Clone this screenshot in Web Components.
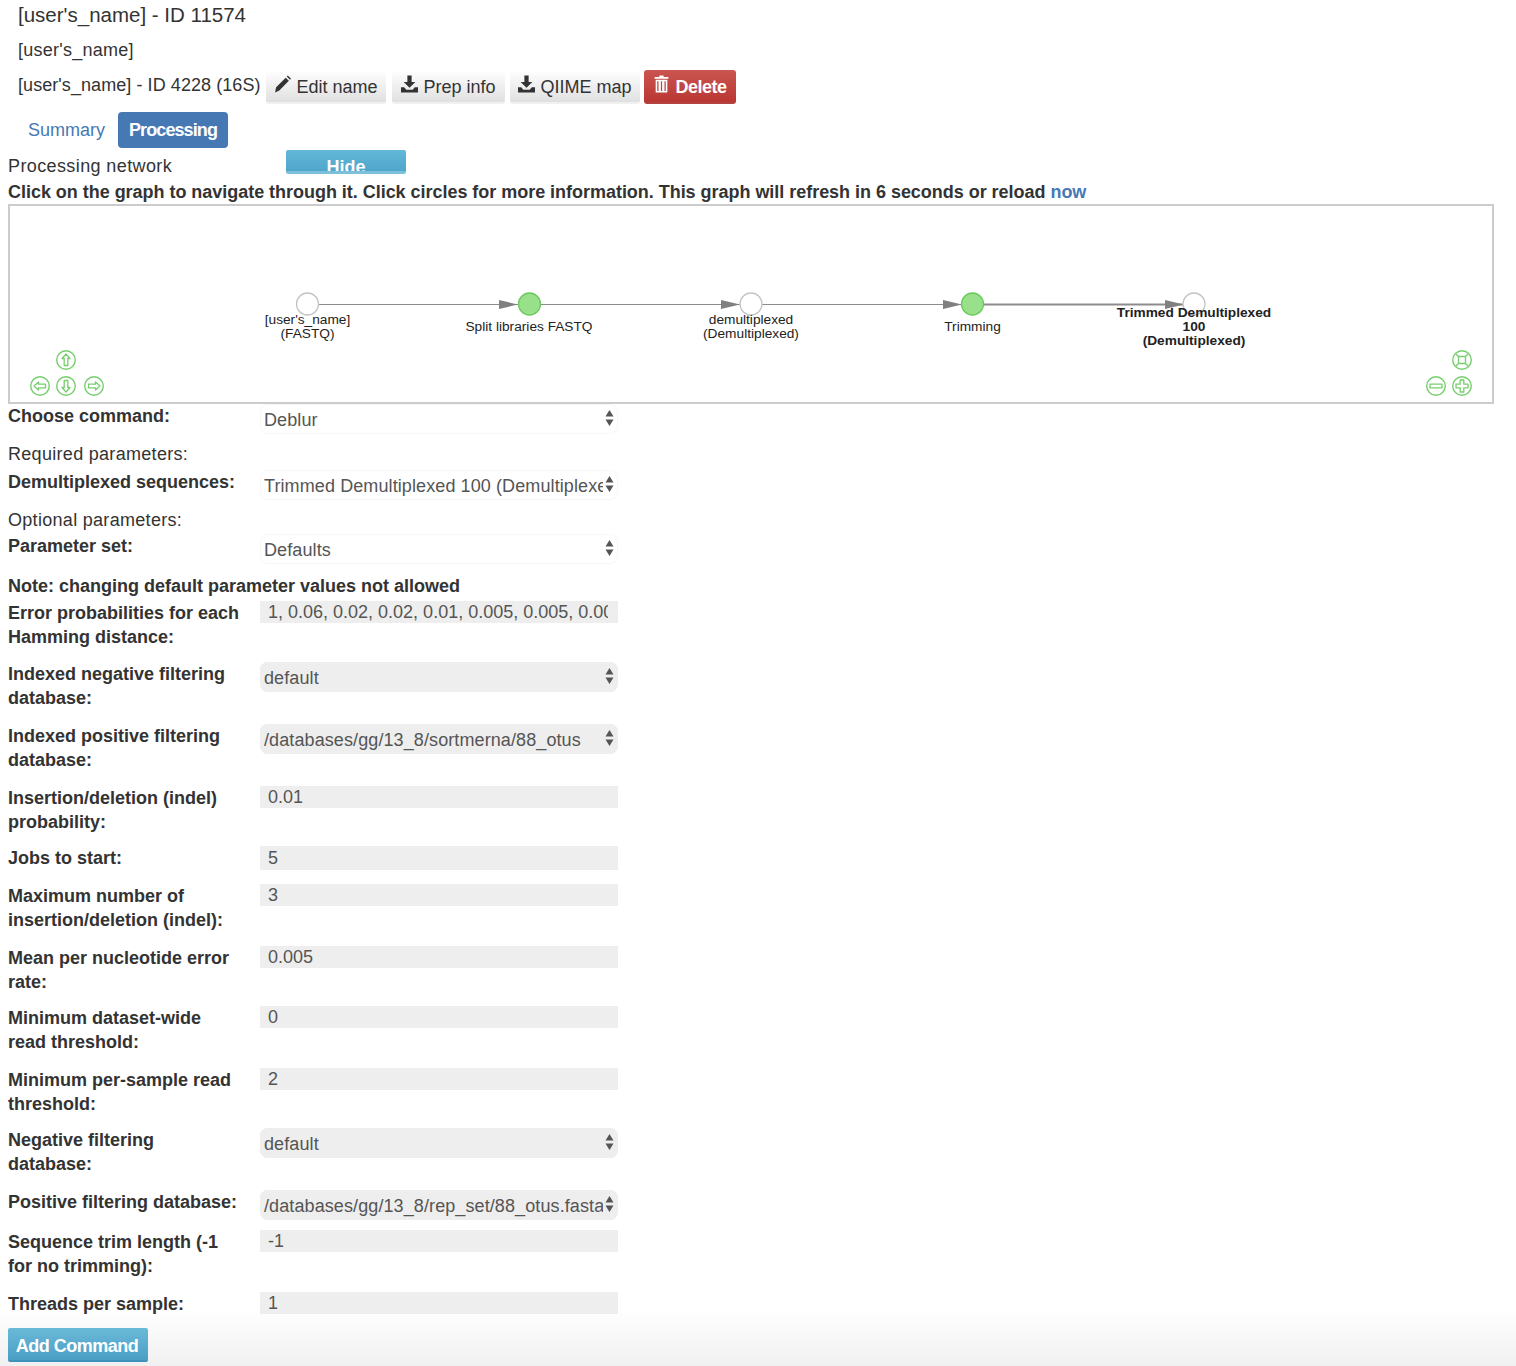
<!DOCTYPE html>
<html lang="en">
<head>
<meta charset="utf-8">
<title>Processing network</title>
<style>
html { background: #fff linear-gradient(to bottom, #fff, #f0f0f0) no-repeat left bottom / 100% 56px; min-height: 1366px; }
body { margin: 0; height: 1366px; overflow: hidden; font: 18px/24px "Liberation Sans", Arial, sans-serif; color: #333; }
</style>
</head>
<body>
<study-head></study-head>
<study-tabs></study-tabs>
<network-graph></network-graph>
<param-row name="Choose command:" h="38"><param-select>Deblur</param-select></param-row>
<param-note h="28">Required parameters:</param-note>
<param-row name="Demultiplexed sequences:" h="38"><param-select>Trimmed Demultiplexed 100 (Demultiplexed)</param-select></param-row>
<param-note h="26">Optional parameters:</param-note>
<param-row name="Parameter set:" h="40"><param-select>Defaults</param-select></param-row>
<param-note h="27" strong>Note: changing default parameter values not allowed</param-note>
<param-row name="Error probabilities for each Hamming distance:" h="61"><param-input>1, 0.06, 0.02, 0.02, 0.01, 0.005, 0.005, 0.005</param-input></param-row>
<param-row name="Indexed negative filtering database:" h="62"><param-select off>default</param-select></param-row>
<param-row name="Indexed positive filtering database:" h="62"><param-select off>/databases/gg/13_8/sortmerna/88_otus</param-select></param-row>
<param-row name="Insertion/deletion (indel) probability:" h="60"><param-input>0.01</param-input></param-row>
<param-row name="Jobs to start:" h="38"><param-input tall>5</param-input></param-row>
<param-row name="Maximum number of insertion/deletion (indel):" h="62"><param-input>3</param-input></param-row>
<param-row name="Mean per nucleotide error rate:" h="60"><param-input>0.005</param-input></param-row>
<param-row name="Minimum dataset-wide read threshold:" h="62"><param-input>0</param-input></param-row>
<param-row name="Minimum per-sample read threshold:" h="60"><param-input>2</param-input></param-row>
<param-row name="Negative filtering database:" h="62"><param-select off>default</param-select></param-row>
<param-row name="Positive filtering database:" h="40"><param-select off>/databases/gg/13_8/rep_set/88_otus.fasta</param-select></param-row>
<param-row name="Sequence trim length (-1 for no trimming):" h="62"><param-input>-1</param-input></param-row>
<param-row name="Threads per sample:" h="36"><param-input>1</param-input></param-row>
<add-command>Add Command</add-command>

<script>
const ICONS = {
    pencil: '<path d="M1 16l1-5L11 2l3 3-9 9zM12 1l1-1 3 3-1 1z"/>',
    download: '<path d="M6 0h4v6h3.5L8 11.5 2.5 6H6zM0 11h3l2 2.500h6L13 11h3v5H0z"/>',
    trash: '<path d="M6 0h4v1.500h4.500V3h-13V1.500H6zM2.500 4h11v12h-11zM4 5.500v9h1.200v-9zM7.400 5.500v9h1.200v-9zM10.800 5.500v9H12v-9z" fill-rule="evenodd"/>'
};

customElements.define('tool-button', class extends HTMLElement {
    constructor() {
        super();
        const danger = this.hasAttribute('danger');
        this.attachShadow({ mode: 'open' }).innerHTML = `<style>
        :host {
            display: flex; align-items: center; justify-content: center; gap: 5px;
            height: 34px; box-sizing: border-box; padding-top: 2px;
            border-radius: 3px;
            font-weight: ${danger ? 'bold' : 'normal'};
            letter-spacing: ${danger ? '-.5px' : '0'};
            color: ${danger ? '#fff' : '#333'};
            background: ${danger ? 'linear-gradient(#cb5550,#b93733)' : 'linear-gradient(#fff,#e0e0e0)'};
            border-bottom: 2px solid ${danger ? '#b4423e' : '#f0f0f0'};
        }
        svg { width: 17px; height: 18px; fill: currentColor; margin-top: -7px; }
        </style><svg viewBox="0 0 16 16">${ICONS[this.getAttribute('icon')]}</svg><slot></slot>`;
    }
});

customElements.define('study-head', class extends HTMLElement {
    constructor() {
        super();
        this.attachShadow({ mode: 'open' }).innerHTML = `<style>
        :host { display: block; padding-left: 18px; }
        h3 { margin: 0; height: 32px; font: 20.500px/30px "Liberation Sans", Arial, sans-serif; }
        p { margin: 0; height: 36px; line-height: 36px; letter-spacing: .25px; }
        nav { display: flex; align-items: center; height: 34px; margin: 2px 0; }
        nav span { width: 248px; margin-top: -4px; letter-spacing: .07px; white-space: nowrap; }
        tool-button:nth-of-type(1) { width: 120px; }
        tool-button:nth-of-type(2) { width: 113px; margin-left: 6px; }
        tool-button:nth-of-type(3) { width: 130px; margin-left: 5px; }
        tool-button:nth-of-type(4) { width: 92px; margin-left: 4px; }
        </style>
        <h3>[user's_name] - ID 11574</h3>
        <p>[user's_name]</p>
        <nav>
            <span>[user's_name] - ID 4228 (16S)</span>
            <tool-button icon="pencil">Edit name</tool-button>
            <tool-button icon="download">Prep info</tool-button>
            <tool-button icon="download">QIIME map</tool-button>
            <tool-button icon="trash" danger>Delete</tool-button>
        </nav>`;
    }
});

customElements.define('study-tabs', class extends HTMLElement {
    constructor() {
        super();
        this.attachShadow({ mode: 'open' }).innerHTML = `<style>
        :host { display: flex; margin: 8px 0 2px 18px; height: 36px; }
        a { display: block; padding: 0 10px; line-height: 36px; border-radius: 4px; color: #4679b4; }
        a:first-of-type { margin-right: 3px; }
        a.on { background: #4679b4; color: #fff; font-weight: bold; letter-spacing: -.9px; width: 110px; box-sizing: border-box; text-align: center; }
        </style><a>Summary</a><a class="on">Processing</a>`;
    }
});

customElements.define('network-graph', class extends HTMLElement {
    constructor() {
        super();
        const node = (x, on) => `<circle cx="${x}" cy="304" r="11" fill="${on ? '#98e08a' : '#fff'}" stroke="${on ? '#6cc95f' : '#c4c4c4'}" stroke-width="1.3"/>`;
        const edge = (a, b, w) => `<path d="M${a} 304.500H${b}" stroke="#8c8c8c" stroke-width="${w}"/><path d="M${b - 19} 300L${b} 304.500l-19 4.500z" fill="#808080"/>`;
        const label = (x, y, lines, bold) => lines.map((t, i) => `<text x="${x}" y="${y + i * 14}" text-anchor="middle" font-weight="${bold ? 'bold' : 'normal'}">${t}</text>`).join('');
        const nav = (x, y, d) => `<g transform="translate(${x} ${y})"><circle r="9.300" fill="#fff" stroke="#76cf6c" stroke-width="1.400"/><path d="${d}" fill="none" stroke="#76cf6c" stroke-width="1.300" stroke-linejoin="round"/></g>`;
        const UP = 'M0-6L4-1.500H1.800V5.500H-1.800V-1.500H-4Z';
        const DOWN = 'M0 6L4 1.500H1.800V-5.500H-1.800V1.500H-4Z';
        const LEFT = 'M-6 0L-1.500-4V-1.800H5.500V1.800H-1.500V4Z';
        const RIGHT = 'M6 0L1.500-4V-1.800H-5.500V1.800H1.500V4Z';
        const MINUS = 'M-6-1.800H6V1.800H-6Z';
        const PLUS = 'M-1.800-6H1.800V-1.800H6V1.800H1.800V6H-1.800V1.800H-6V-1.800H-1.800Z';
        const FIT = 'M-3.500-3.500H3.500V3.500H-3.500ZM-3.500-3.500L-6-6M3.500-3.500L6-6M-3.500 3.500L-6 6M3.500 3.500L6 6';
        this.attachShadow({ mode: 'open' }).innerHTML = `<style>
        :host { display: block; }
        header { display: flex; height: 30px; padding-left: 8px; }
        header span { width: 278px; line-height: 32px; letter-spacing: .39px; }
        button {
            all: unset; width: 120px; height: 24px; box-sizing: border-box; overflow: hidden;
            text-align: center; color: #fff; font-weight: bold; line-height: 35px; border-radius: 2px;
            background: linear-gradient(#63b8d8,#4fa6cc); border-bottom: 3px solid #7cc0dc;
        }
        p { margin: 0; height: 24px; padding-left: 8px; font-weight: bold; white-space: nowrap; letter-spacing: -.03px; }
        p a { color: #4679b4; }
        section { height: 200px; margin: 0 22px 0 8px; box-sizing: border-box; border: 2px solid #ccc; }
        svg { display: block; font: 13.700px "Liberation Sans", Arial, sans-serif; fill: #222; }
        </style>
        <header><span>Processing network</span><button>Hide</button></header>
        <p>Click on the graph to navigate through it. Click circles for more information. This graph will refresh in 6 seconds or reload <a>now</a></p>
        <section>
            <svg width="1482" height="196" viewBox="10 206 1482 196">
                ${edge(318, 518, 1)}${edge(540, 740, 1)}${edge(762, 962, 1)}${edge(984, 1184, 2)}
                ${node(307.500)}${node(529.500, 1)}${node(751)}${node(972.500, 1)}${node(1194)}
                ${label(307.500, 324, ["[user's_name]", '(FASTQ)'])}
                ${label(529, 331, ['Split libraries FASTQ'])}
                ${label(751, 324, ['demultiplexed', '(Demultiplexed)'])}
                ${label(972.500, 331, ['Trimming'])}
                ${label(1194, 317, ['Trimmed Demultiplexed', '100', '(Demultiplexed)'], 1)}
                ${nav(66, 360, UP)}${nav(40, 386, LEFT)}${nav(66, 386, DOWN)}${nav(94, 386, RIGHT)}
                ${nav(1462, 360, FIT)}${nav(1436, 386, MINUS)}${nav(1462, 386, PLUS)}
            </svg>
        </section>`;
    }
});

customElements.define('param-note', class extends HTMLElement {
    constructor() {
        super();
        const strong = this.hasAttribute('strong');
        this.attachShadow({ mode: 'open' }).innerHTML = `<style>
        :host {
            display: block; padding-left: 8px; height: ${this.getAttribute('h')}px;
            font-weight: ${strong ? 'bold' : 'normal'};
            letter-spacing: ${strong ? '0' : '.3px'};
        }
        </style><slot></slot>`;
    }
});

customElements.define('param-row', class extends HTMLElement {
    constructor() {
        super();
        this.attachShadow({ mode: 'open' }).innerHTML = `<style>
        :host { display: grid; grid-template-columns: 252px 358px; padding-left: 8px; height: ${this.getAttribute('h')}px; }
        label { font-weight: bold; padding-right: 19px; }
        </style><label>${this.getAttribute('name')}</label><div><slot></slot></div>`;
    }
});

customElements.define('param-select', class extends HTMLElement {
    constructor() {
        super();
        const off = this.hasAttribute('off');
        this.attachShadow({ mode: 'open' }).innerHTML = `<style>
        :host {
            display: block; position: relative; height: 30px;
            padding: 0 15px 0 4px;
            line-height: 33px; white-space: nowrap; color: #555; letter-spacing: .1px;
            border-radius: 8px; background: ${off ? '#eee' : '#fff'};
            box-shadow: inset 0 0 0 1px ${off ? '#eee' : '#f7f7f7'};
        }
        div { overflow: hidden; height: 30px; }
        svg { position: absolute; right: 4px; top: 6px; fill: #555; }
        </style><div><slot></slot></div><svg width="9" height="16" viewBox="0 0 9 16"><path d="M4.500 0L8.500 6.500H.5zM4.500 16L8.500 9.500H.5z"/></svg>`;
    }
});

customElements.define('param-input', class extends HTMLElement {
    constructor() {
        super();
        const h = this.hasAttribute('tall') ? 24 : 22;
        this.attachShadow({ mode: 'open' }).innerHTML = `<style>
        :host {
            display: block; height: ${h}px; padding: 0 10px 0 8px;
            line-height: ${h + 1}px; white-space: nowrap; color: #555; background: #eee;
        }
        div { overflow: hidden; height: ${h}px; }
        </style><div><slot></slot></div>`;
    }
});

customElements.define('add-command', class extends HTMLElement {
    constructor() {
        super();
        this.attachShadow({ mode: 'open' }).innerHTML = `<style>
        :host {
            display: block; width: 140px; height: 34px; margin-left: 8px; box-sizing: border-box; padding-right: 2px;
            text-align: center; line-height: 36px; color: #fff; font-weight: bold; letter-spacing: -.5px;
            border-radius: 2px; background: linear-gradient(#6ab9d8,#4a9fc6); border-bottom: 2px solid #3f93ba;
        }
        </style><slot></slot>`;
    }
});
</script>
</body>
</html>
